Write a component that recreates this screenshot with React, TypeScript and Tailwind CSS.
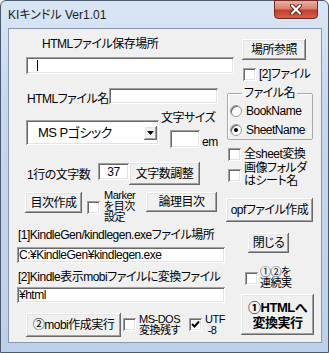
import type { ReactNode } from 'react'

const raised =
  'bg-[#f0f0f0] shadow-[inset_-1px_-1px_0_#696969,inset_1px_1px_0_#ffffff,inset_-2px_-2px_0_#a0a0a0,inset_2px_2px_0_#e3e3e3]'
const sunken =
  'bg-white shadow-[inset_1px_1px_0_#a0a0a0,inset_-1px_-1px_0_#ffffff,inset_2px_2px_0_#696969,inset_-2px_-2px_0_#e3e3e3]'

function Button({ className = '', children }: { className?: string; children: ReactNode }) {
  return (
    <div className={`flex shrink-0 items-center justify-center whitespace-nowrap text-center ${raised} ${className}`}>
      {children}
    </div>
  )
}

function Field({ className = '', children }: { className?: string; children?: ReactNode }) {
  return (
    <div className={`flex shrink-0 items-center overflow-hidden whitespace-nowrap ${sunken} ${className}`}>
      {children}
    </div>
  )
}

function Check({ checked = false, className = '' }: { checked?: boolean; className?: string }) {
  return (
    <div className={`relative h-[13px] w-[13px] shrink-0 ${sunken} ${className}`}>
      {checked && (
        <svg className="absolute left-[2px] top-[2px]" width="9" height="9" viewBox="0 0 9 9">
          <path d="M1 4 L3.5 6.5 L8 1.5" fill="none" stroke="#000" strokeWidth="2" />
        </svg>
      )}
    </div>
  )
}

function Radio({ checked = false }: { checked?: boolean }) {
  return (
    <div className="flex h-[12px] w-[12px] shrink-0 items-center justify-center rounded-full border border-[#9a9a9a] bg-white shadow-[inset_1px_1px_0_#5f5f5f]">
      {checked && <div className="h-[4px] w-[4px] rounded-full bg-black" />}
    </div>
  )
}

export default function App() {
  return (
    <div className="h-[353px] w-[329px] font-['Liberation_Sans','Noto_Sans_CJK_JP',sans-serif] text-[12px] leading-[14px] tracking-[-0.5px] text-black [font-feature-settings:'palt']">
      <div className="flex h-[353px] w-[329px] flex-col rounded-t-[6px] border border-[#4b5a6d] bg-[linear-gradient(180deg,#d9e6f5_0%,#c6d8ee_30%,#bcd0e9_100%)]">
        {/* title bar */}
        <div className="flex h-[27px] shrink-0 items-start pl-[7px] pr-[10px]">
          <div className="mt-[6px] text-[12px] leading-[16px] tracking-normal text-[#1b1b1b]">KIキンドル Ver1.01</div>
          <div className="-mt-px ml-auto flex h-[19px] w-[44px] items-center justify-center rounded-b-[4px] border border-[#6e2a22] bg-[linear-gradient(180deg,#eab0a3_0%,#d9806f_45%,#c2402b_55%,#d4614a_100%)]">
            <svg width="14" height="11" viewBox="0 0 14 11">
              <path d="M3 1.5 L11 9.5 M11 1.5 L3 9.5" stroke="#5b1f17" strokeWidth="4" strokeLinecap="round" />
              <path d="M3 1.5 L11 9.5 M11 1.5 L3 9.5" stroke="#ffffff" strokeWidth="2.2" strokeLinecap="round" />
            </svg>
          </div>
        </div>

        {/* client area */}
        <div className="ml-[7px] mr-[6px] flex h-[315px] flex-col border border-[#8799b0] bg-[#f0f0f0]">
          {/* section 1 */}
          <div className="flex h-[55px] items-start">
            <div className="ml-[17px] flex w-[208px] flex-col">
              <div className="ml-[16px] mt-[8px]">HTMLファイル保存場所</div>
              <Field className="mt-[6px] h-[17px] w-[208px]">
                <div className="ml-[11px] h-[11px] w-px bg-black" />
              </Field>
            </div>
            <div className="ml-[8px] flex flex-col">
              <Button className="mt-[10px] h-[21px] w-[64px]">場所参照</Button>
              <div className="ml-[1px] mt-[7px] flex items-center">
                <Check />
                <span className="ml-[3px] whitespace-nowrap">[2]ファイル</span>
              </div>
            </div>
          </div>

          {/* section 2 */}
          <div className="flex h-[105px] items-start">
            <div className="ml-[17px] flex w-[190px] flex-col">
              <div className="mt-[4px] flex items-start">
                <div className="ml-[1px] mt-[4px] whitespace-nowrap">HTMLファイル名</div>
                <Field className="ml-auto h-[16px] w-[109px]" />
              </div>
              <div className="flex items-start">
                <Field className="mt-[14px] h-[25px] w-[133px]">
                  <span className="ml-[12px] text-[13px]">MS Pゴシック</span>
                  <div className={`ml-auto mr-[2px] flex h-[14px] w-[13px] items-center justify-center ${raised}`}>
                    <svg width="7" height="4" viewBox="0 0 7 4">
                      <path d="M0 0 H7 L3.5 4 Z" fill="#000" />
                    </svg>
                  </div>
                </Field>
                <div className="ml-[2px] flex flex-col">
                  <div className="mt-[5px] whitespace-nowrap">文字サイズ</div>
                  <div className="mt-[5px] flex items-end">
                    <Field className="ml-[9px] h-[18px] w-[30px]" />
                    <span className="ml-[2px] leading-[12px]">em</span>
                  </div>
                </div>
              </div>
              <div className="mt-[14px] flex items-start">
                <div className="ml-[1px] mt-[6px] w-[71px] whitespace-nowrap">1行の文字数</div>
                <Field className="mt-[1px] h-[17px] w-[31px] justify-center">37</Field>
                <Button className="h-[23px] w-[71px]">文字数調整</Button>
              </div>
            </div>
            <div className="ml-[11px] flex flex-col">
              <fieldset className="mt-[3px] h-[53px] w-[86px] rounded-[2px] border border-[#a8a8a8] px-[2px] shadow-[inset_1px_1px_0_#ffffff]">
                <legend className="ml-[12px] px-[2px] leading-[12px]">ファイル名</legend>
                <div className="mt-[5px] flex items-center">
                  <Radio />
                  <span className="ml-[4px]">BookName</span>
                </div>
                <div className="mt-[5px] flex items-center">
                  <Radio checked />
                  <span className="ml-[4px]">SheetName</span>
                </div>
              </fieldset>
              <div className="ml-[1px] mt-[7px] flex items-center">
                <Check />
                <span className="ml-[3px] whitespace-nowrap">全sheet変換</span>
              </div>
              <div className="ml-[1px] mt-[1px] flex items-center">
                <Check />
                <span className="ml-[3px] whitespace-nowrap leading-[13px]">
                  画像フォルダ
                  <br />
                  はシート名
                </span>
              </div>
            </div>
          </div>

          {/* section 3 */}
          <div className="flex h-[36px] items-start">
            <Button className="ml-[16px] mt-[3px] h-[21px] w-[57px]">目次作成</Button>
            <Check className="ml-[5px] mt-[12px]" />
            <div className="ml-[4px] mt-[1px] w-[38px] whitespace-nowrap text-[11px] leading-[11px]">
              Marker
              <br />
              を目次
              <br />
              設定
            </div>
            <Button className="ml-[4px] mt-[3px] h-[20px] w-[71px]">論理目次</Button>
            <Button className="ml-[9px] mt-[9px] h-[24px] w-[87px]">opfファイル作成</Button>
          </div>

          {/* section 4 */}
          <div className="flex h-[40px] items-start">
            <div className="ml-[8px] flex w-[208px] flex-col">
              <div className="ml-[1px] mt-[3px] whitespace-nowrap">[1]KindleGen/kindlegen.exeファイル場所</div>
              <Field className="mt-[5px] h-[16px] w-[208px]">
                <span className="ml-[2px]">C:¥KindleGen¥kindlegen.exe</span>
              </Field>
            </div>
            <Button className="ml-[23px] mt-[8px] h-[20px] w-[41px]">閉じる</Button>
          </div>

          {/* section 5 */}
          <div className="flex items-start">
            <div className="ml-[8px] flex w-[208px] flex-col">
              <div className="ml-[1px] mt-[5px] whitespace-nowrap">[2]Kindle表示mobiファイルに変換ファイル</div>
              <Field className="mt-[3px] h-[16px] w-[208px]">
                <span className="ml-[2px]">¥html</span>
              </Field>
              <div className="mt-[10px] flex items-start">
                <Button className="ml-[9px] h-[24px] w-[95px]">②mobi作成実行</Button>
                <Check className="ml-[2px] mt-[5px]" />
                <div className="ml-[3px] mt-[1px] w-[52px] whitespace-nowrap text-[11px] leading-[11px]">
                  MS-DOS
                  <br />
                  変換残す
                </div>
                <Check checked className="ml-[4px] mt-[5px]" />
                <div className="ml-[3px] mt-[1px] whitespace-nowrap text-[11px] leading-[11px]">
                  UTF
                  <br />
                  &nbsp;-8
                </div>
              </div>
            </div>
            <div className="ml-[16px] flex flex-col">
              <div className="ml-[4px] mt-[2px] flex items-start">
                <Check className="mt-[5px]" />
                <div className="ml-[2px] whitespace-nowrap text-[11px] leading-[11px]">
                  ①②を
                  <br />
                  連続実
                </div>
              </div>
              <Button className="mt-[5px] h-[41px] w-[73px] text-[13px] font-bold leading-[15px]">
                ①HTMLへ
                <br />
                変換実行
              </Button>
            </div>
          </div>
        </div>
      </div>
    </div>
  )
}
